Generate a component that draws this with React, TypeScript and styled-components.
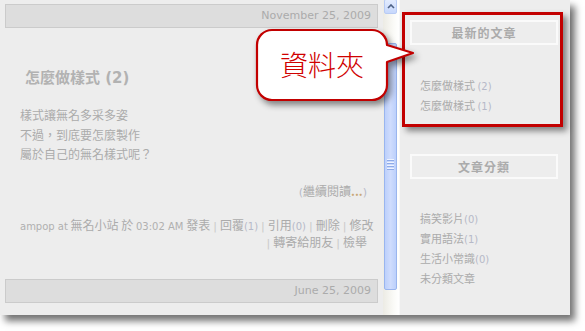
import React from "react";
import styled, { createGlobalStyle } from "styled-components";

const Global = createGlobalStyle`
  html, body { margin: 0; padding: 0; background: #ffffff; }
  body { font-family: "DejaVu Sans", "Noto Sans CJK TC", sans-serif; }
`;

const Stage = styled.div`
  position: relative;
  width: 585px;
  height: 331px;
  overflow: hidden;
  background: #fff;
`;

const Frame = styled.div`
  width: 570px;
  height: 315px;
  display: flex;
  background: #ededed;
  box-shadow: 5px 6px 7px rgba(0, 0, 0, 0.55);
  overflow: hidden;
`;

const Main = styled.div`
  width: 383px;
  flex: none;
  box-sizing: border-box;
  padding: 4px 5px 0 5px;
  display: flex;
  flex-direction: column;
`;

const DateBar = styled.div<{ $mt?: number }>`
  height: 24px;
  box-sizing: border-box;
  margin-top: ${(p) => p.$mt ?? 0}px;
  background: #dddddd;
  border: 1px solid #cbcbcb;
  color: #ababab;
  font-family: "DejaVu Sans", sans-serif;
  font-size: 11px;
  line-height: 22px;
  text-align: right;
  padding-right: 6px;
`;

const Post = styled.div`
  padding: 0 11px 0 15px;
  display: flex;
  flex-direction: column;
`;

const Title = styled.div`
  margin-top: 40px;
  padding-left: 5px;
  font-family: "DejaVu Sans", "Noto Sans CJK TC", sans-serif;
  font-size: 15px;
  font-weight: bold;
  line-height: 20px;
  color: #b2b2b2;
`;

const Body = styled.div`
  margin-top: 17px;
  font-family: "Noto Sans CJK TC", sans-serif;
  font-size: 12px;
  line-height: 19.5px;
  color: #ababab;
`;

const ReadMore = styled.div`
  margin-top: 18px;
  text-align: right;
  font-family: "Noto Sans CJK TC", sans-serif;
  font-size: 12px;
  line-height: 18px;
  color: #ababab;
`;

const Paren = styled.span`
  color: #b6b9c8;
  font-family: "DejaVu Sans", sans-serif;
  font-size: 11px;
`;

const Dots = styled.span`
  color: #c9a877;
  font-weight: bold;
`;

const Meta = styled.div<{ $mt?: number }>`
  margin-top: ${(p) => p.$mt ?? 0}px;
  text-align: right;
  white-space: nowrap;
  font-family: "Noto Sans CJK TC", sans-serif;
  font-size: 12px;
  line-height: 15px;
  color: #ababab;
`;

const Latin = styled.span`
  font-family: "DejaVu Sans", sans-serif;
  font-size: 10px;
  color: #b0b0b0;
`;

const Num = styled.span`
  font-family: "DejaVu Sans", sans-serif;
  font-size: 10px;
  color: #b6b9c8;
`;

const Sep = styled.span`
  color: #cacaca;
  font-family: "DejaVu Sans", sans-serif;
  font-size: 11px;
  margin: 0 3px;
`;

const ScrollTrack = styled.div`
  width: 17px;
  flex: none;
  box-sizing: border-box;
  padding: 0 2px 0 1px;
  display: flex;
  flex-direction: column;
  background: linear-gradient(to right, #ecebe4, #fbfbf8 70%, #ffffff);
  border-right: 1px solid #f8f8f8;
`;

const UpButton = styled.div`
  height: 15px;
  margin-top: -1px;
  box-sizing: border-box;
  border: 1px solid #b8cbf4;
  border-radius: 2px;
  background: linear-gradient(to bottom, #e3ecfe, #c6d7fc);
  display: flex;
  align-items: center;
  justify-content: center;
`;

const Thumb = styled.div`
  margin-top: 29px;
  height: 247px;
  box-sizing: border-box;
  border: 1px solid #9ab5ee;
  border-radius: 2px;
  background: linear-gradient(to right, #bcd0fb, #cfdcfd 50%, #bcd0fb);
  display: flex;
  align-items: center;
  justify-content: center;
`;

const Grip = styled.div`
  display: flex;
  flex-direction: column;
  gap: 1px;
  margin-top: -4px;
`;

const GripLine = styled.div`
  width: 7px;
  height: 1px;
  background: #eef3ff;
  border-bottom: 1px solid #8eabe8;
`;

const Sidebar = styled.div`
  flex: 1;
  box-sizing: border-box;
  padding: 20px 12px 0 10px;
  display: flex;
  flex-direction: column;
`;

const BoxHeader = styled.div<{ $mt?: number }>`
  height: 25px;
  margin-top: ${(p) => p.$mt ?? 0}px;
  box-sizing: border-box;
  border: 2px solid #fafafa;
  display: flex;
  align-items: center;
  justify-content: center;
  font-family: "Noto Sans CJK TC", sans-serif;
  font-size: 12px;
  font-weight: bold;
  letter-spacing: 1px;
  color: #ababab;
`;

const List = styled.div<{ $mt: number }>`
  margin-top: ${(p) => p.$mt}px;
  padding-left: 10px;
  display: flex;
  flex-direction: column;
`;

const Item = styled.div`
  font-family: "Noto Sans CJK TC", sans-serif;
  font-size: 11px;
  line-height: 19px;
  color: #ababab;
  white-space: nowrap;
`;

const Highlight = styled.div`
  position: absolute;
  left: 402px;
  top: 12px;
  width: 161px;
  height: 115px;
  box-sizing: border-box;
  border: 3px solid #c20000;
  box-shadow: 4px 4px 6px rgba(0, 0, 0, 0.45);
`;

const Callout = styled.div`
  position: absolute;
  left: 250px;
  top: 25px;
  width: 170px;
  height: 85px;
`;

const CalloutShape = styled.svg`
  position: absolute;
  inset: 0;
  overflow: visible;
  filter: drop-shadow(3px 4px 3px rgba(0, 0, 0, 0.45));
`;

const CalloutText = styled.div`
  position: absolute;
  left: 7px;
  top: 5px;
  width: 130px;
  height: 70px;
  display: flex;
  align-items: center;
  justify-content: center;
  font-family: "Noto Sans CJK TC", serif;
  font-size: 28px;
  font-weight: 300;
  color: #d00000;
  padding-bottom: 2px;
  box-sizing: border-box;
`;

export default function App() {
  return (
    <Stage>
      <Global />
      <Frame>
        <Main>
          <DateBar>November 25, 2009</DateBar>
          <Post>
            <Title>怎麼做樣式 (2)</Title>
            <Body>
              <div>樣式讓無名多采多姿</div>
              <div>不過，到底要怎麼製作</div>
              <div>屬於自己的無名樣式呢？</div>
            </Body>
            <ReadMore>
              <Paren>(</Paren>繼續閱讀<Dots>...</Dots>
              <Paren>)</Paren>
            </ReadMore>
            <Meta $mt={15}>
              <Latin>ampop at</Latin> 無名小站 於 <Latin>03:02 AM</Latin> 發表
              <Sep>|</Sep>回覆<Num>(1)</Num>
              <Sep>|</Sep>引用<Num>(0)</Num>
              <Sep>|</Sep>刪除<Sep>|</Sep>修改
            </Meta>
            <Meta>
              <Sep>|</Sep>轉寄給朋友<Sep>|</Sep>檢舉
            </Meta>
          </Post>
          <DateBar $mt={28}>June 25, 2009</DateBar>
        </Main>
        <ScrollTrack>
          <UpButton>
            <svg width="8" height="5" viewBox="0 0 8 5">
              <path d="M1 4 L4 1 L7 4" fill="none" stroke="#4d6185" strokeWidth="1.6" />
            </svg>
          </UpButton>
          <Thumb>
            <Grip>
              <GripLine />
              <GripLine />
              <GripLine />
              <GripLine />
            </Grip>
          </Thumb>
        </ScrollTrack>
        <Sidebar>
          <BoxHeader>最新的文章</BoxHeader>
          <List $mt={31}>
            <Item>
              怎麼做樣式 <Num>(2)</Num>
            </Item>
            <Item>
              怎麼做樣式 <Num>(1)</Num>
            </Item>
          </List>
          <BoxHeader $mt={38}>文章分類</BoxHeader>
          <List $mt={30}>
            <Item>
              搞笑影片<Num>(0)</Num>
            </Item>
            <Item>
              實用語法<Num>(1)</Num>
            </Item>
            <Item>
              生活小常識<Num>(0)</Num>
            </Item>
            <Item>未分類文章</Item>
          </List>
        </Sidebar>
      </Frame>
      <Highlight />
      <Callout>
        <CalloutShape width="170" height="85" viewBox="0 0 170 85">
          <path
            d="M22 5 H122 A15 15 0 0 1 137 20 L163 28 L137 37 V60 A15 15 0 0 1 122 75 H22 A15 15 0 0 1 7 60 V20 A15 15 0 0 1 22 5 Z"
            fill="#ffffff"
            stroke="#c20000"
            strokeWidth="2.2"
            strokeLinejoin="round"
          />
        </CalloutShape>
        <CalloutText>資料夾</CalloutText>
      </Callout>
    </Stage>
  );
}
